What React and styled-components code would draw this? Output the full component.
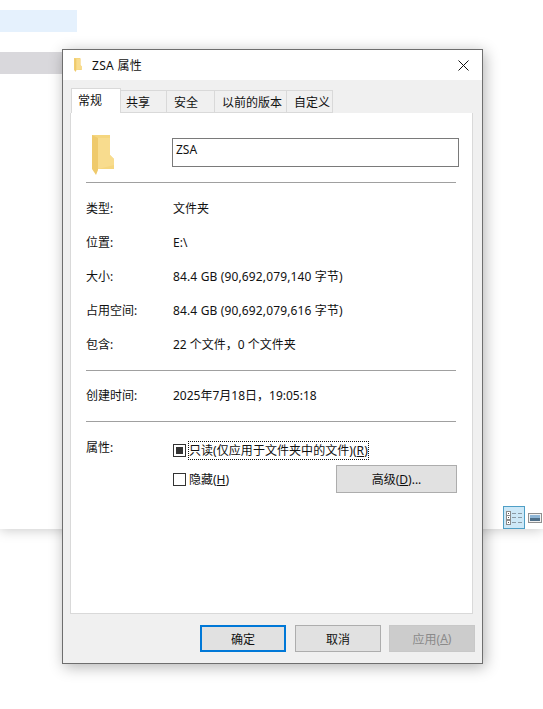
import React from 'react';
import styled, { createGlobalStyle } from 'styled-components';

const GlobalStyle = createGlobalStyle`
  html, body {
    margin: 0;
    padding: 0;
    background: #fff;
  }
  body {
    font-family: "Noto Sans", "Noto Sans CJK SC", sans-serif;
    font-size: 12px;
    color: #111;
  }
`;

const Page = styled.div`
  position: relative;
  width: 543px;
  height: 709px;
  overflow: hidden;
  background: #fff;
`;

const BackWindow = styled.div`
  height: 529px;
  display: flex;
  flex-direction: column;
  background: #fff;
  box-shadow: 0 1px 12px rgba(0, 0, 0, 0.22);
`;
const NavSelected = styled.div`
  width: 77px;
  height: 22px;
  margin-top: 10px;
  background: #e5f1fd;
`;
const ListSelected = styled.div`
  width: 70px;
  height: 22px;
  margin-top: 20px;
  background: #d9d8dc;
`;
const ViewSwitch = styled.div`
  margin-top: auto;
  display: flex;
  justify-content: flex-end;
  gap: 3px;
`;
const ViewButton = styled.div`
  width: ${(p) => (p.$active ? 22 : 15)}px;
  height: 23px;
  box-sizing: border-box;
  display: flex;
  align-items: center;
  justify-content: ${(p) => (p.$active ? 'center' : 'flex-start')};
  background: ${(p) => (p.$active ? '#cde8f7' : 'transparent')};
  border: ${(p) => (p.$active ? '1px solid #4f9fc6' : 'none')};
`;

const Dialog = styled.div`
  position: absolute;
  left: 62px;
  top: 49px;
  width: 419px;
  height: 613px;
  display: flex;
  flex-direction: column;
  background: #f0f0f0;
  border: 1px solid #6e6e6e;
  box-shadow: 2px 3px 14px rgba(0, 0, 0, 0.3);
`;
const TitleBar = styled.div`
  height: 30px;
  display: flex;
  align-items: center;
  padding: 0 13px 0 10px;
  background: #fff;
`;
const Title = styled.div`
  margin-left: 9px;
  letter-spacing: 0.3px;
  flex: 1;
`;
const Tabs = styled.div`
  height: 33px;
  display: flex;
  align-items: flex-end;
  padding-left: 8px;
`;
const Tab = styled.div`
  width: ${(p) => p.$w}px;
  height: ${(p) => (p.$active ? 25 : 23)}px;
  box-sizing: border-box;
  display: flex;
  align-items: center;
  padding-left: ${(p) => p.$inset}px;
  padding-bottom: ${(p) => (p.$active ? 2 : 0)}px;
  background: ${(p) => (p.$active ? '#fff' : '#f0f0f0')};
  border: 1px solid #d9d9d9;
  border-left-width: ${(p) => (p.$active ? 1 : 0)}px;
  border-bottom: ${(p) => (p.$active ? 'none' : '1px solid #d9d9d9')};
`;
const Panel = styled.div`
  width: 403px;
  height: 501px;
  box-sizing: border-box;
  margin-left: 7px;
  padding: 0 16px 0 15px;
  background: #fff;
  border: 1px solid #d9d9d9;
  border-top: none;
`;
const NameRow = styled.div`
  height: 69px;
  display: flex;
  align-items: flex-start;
`;
const FolderBox = styled.div`
  width: 86px;
  flex-shrink: 0;
  padding: 22px 0 0 6px;
  box-sizing: border-box;
`;
const NameField = styled.div`
  width: 287px;
  height: 29px;
  box-sizing: border-box;
  margin-top: 25px;
  padding: 2px 3px;
  border: 1px solid #7a7a7a;
  flex-shrink: 0;
`;
const Divider = styled.div`
  width: 370px;
  height: 1px;
  background: #a0a0a0;
`;
const InfoGroup = styled.div`
  display: flex;
  flex-direction: column;
  gap: 16px;
  padding: ${(p) => p.$pad};
`;
const Row = styled.div`
  display: flex;
  height: 18px;
  line-height: 18px;
`;
const Label = styled.div`
  width: 87px;
  flex-shrink: 0;
`;
const Value = styled.div`
  letter-spacing: ${(p) => p.$spacing || 0}px;
`;
const AttrRow = styled.div`
  display: flex;
  padding-top: 16px;
`;
const AttrOptions = styled.div`
  flex: 1;
  display: flex;
  flex-direction: column;
  padding-top: 3px;
`;
const Check = styled.div`
  display: flex;
  align-items: center;
  height: 18px;
`;
const CheckBox = styled.div`
  width: 13px;
  height: 13px;
  box-sizing: border-box;
  margin-right: 3px;
  border: 1px solid #333;
  display: flex;
  align-items: center;
  justify-content: center;
  &::after {
    content: '';
    display: ${(p) => (p.$mixed ? 'block' : 'none')};
    width: 7px;
    height: 7px;
    background: #333;
  }
`;
const FocusText = styled.span`
  outline: 1px dotted #111;
  line-height: 17px;
  letter-spacing: 0.05px;
`;
const HiddenRow = styled.div`
  display: flex;
  align-items: center;
  justify-content: space-between;
  margin-top: 6px;
  width: 284px;
`;
const Hotkey = styled.span`
  text-decoration: underline;
  text-underline-offset: 1px;
`;
const Button = styled.div`
  width: ${(p) => p.$w || 86}px;
  height: ${(p) => p.$h || 27}px;
  box-sizing: border-box;
  display: flex;
  align-items: center;
  justify-content: center;
  margin-right: ${(p) => (p.$primary ? 1 : 0)}px;
  background: ${(p) => (p.$disabled ? '#cccccc' : '#e1e1e1')};
  color: ${(p) => (p.$disabled ? '#8a8a8a' : '#111')};
  border: ${(p) => (p.$primary ? '2px solid #0078d7' : p.$disabled ? '1px solid #c8c8c8' : '1px solid #adadad')};
`;
const Footer = styled.div`
  display: flex;
  justify-content: flex-end;
  gap: 8px;
  padding: 11px 7px 0 0;
`;

const CloseIcon = () => (
  <svg width="11" height="11" viewBox="0 0 11 11">
    <path d="M0.5 0.5L10.5 10.5M10.5 0.5L0.5 10.5" stroke="#111" strokeWidth="1" fill="none" />
  </svg>
);

const FolderIcon = ({ w, h }) => (
  <svg width={w} height={h} viewBox="0 0 22 40">
    <path d="M0 0H18V20L22 24V34H6L0 34Z" fill="#f5d67f" />
    <path d="M6 3H18V20L22 24V30L6 34Z" fill="#f8dc8e" />
    <path d="M0 0L6 3V35L4 40L0 34Z" fill="#efca6c" />
  </svg>
);

const DetailsIcon = () => (
  <svg width="16" height="14" viewBox="0 0 16 14">
    <rect x="0.5" y="0.5" width="4" height="4" fill="#fff" stroke="#8a8a8a" />
    <rect x="0.5" y="4.5" width="4" height="4" fill="#fff" stroke="#8a8a8a" />
    <rect x="0.5" y="9.5" width="4" height="4" fill="#fff" stroke="#8a8a8a" />
    <rect x="2" y="2" width="1" height="1" fill="#555" />
    <rect x="2" y="6" width="1" height="1" fill="#555" />
    <rect x="2" y="11" width="1" height="1" fill="#555" />
    <path d="M6 2.5h4M12 2.5h4M6 6.5h4M12 6.5h4M6 11.5h4M12 11.5h4" stroke="#8a9aa5" />
  </svg>
);

const PreviewIcon = () => (
  <svg width="14" height="10" viewBox="0 0 14 10">
    <rect x="0.5" y="0.5" width="13" height="9" fill="#f2f2f2" stroke="#8f8f8f" />
    <rect x="2" y="2" width="10" height="3" fill="#8fb6d6" />
    <rect x="2" y="5" width="10" height="3" fill="#4f6f88" />
  </svg>
);

const infoRows = [
  ['类型:', '文件夹'],
  ['位置:', 'E:\\'],
  ['大小:', '84.4 GB (90,692,079,140 字节)', 0.14],
  ['占用空间:', '84.4 GB (90,692,079,616 字节)', 0.14],
  ['包含:', '22 个文件，0 个文件夹'],
];

const tabs = [
  ['常规', 50, 6],
  ['共享', 46, 5],
  ['安全', 48, 7],
  ['以前的版本', 72, 7],
  ['自定义', 46, 7],
];

export default function App() {
  return (
    <Page>
      <GlobalStyle />
      <BackWindow>
        <NavSelected />
        <ListSelected />
        <ViewSwitch>
          <ViewButton $active><DetailsIcon /></ViewButton>
          <ViewButton><PreviewIcon /></ViewButton>
        </ViewSwitch>
      </BackWindow>
      <Dialog>
        <TitleBar>
          <FolderIcon w={10} h={14} />
          <Title>ZSA 属性</Title>
          <CloseIcon />
        </TitleBar>
        <Tabs>
          {tabs.map(([name, w, inset], i) => (
            <Tab key={name} $w={w} $inset={inset} $active={i === 0}>{name}</Tab>
          ))}
        </Tabs>
        <Panel>
          <NameRow>
            <FolderBox><FolderIcon w={22} h={40} /></FolderBox>
            <NameField>ZSA</NameField>
          </NameRow>
          <Divider />
          <InfoGroup $pad="17px 0 16px">
            {infoRows.map(([k, v, spacing]) => (
              <Row key={k}><Label>{k}</Label><Value $spacing={spacing}>{v}</Value></Row>
            ))}
          </InfoGroup>
          <Divider />
          <InfoGroup $pad="16px 0 16px">
            <Row><Label>创建时间:</Label><Value>2025年7月18日，19:05:18</Value></Row>
          </InfoGroup>
          <Divider />
          <AttrRow>
            <Label>属性:</Label>
            <AttrOptions>
              <Check>
                <CheckBox $mixed />
                <FocusText>只读(仅应用于文件夹中的文件)(<Hotkey>R</Hotkey>)</FocusText>
              </Check>
              <HiddenRow>
                <Check>
                  <CheckBox />
                  <span>隐藏(<Hotkey>H</Hotkey>)</span>
                </Check>
                <Button $w={121} $h={28}>高级(<Hotkey>D</Hotkey>)...</Button>
              </HiddenRow>
            </AttrOptions>
          </AttrRow>
        </Panel>
        <Footer>
          <Button $primary>确定</Button>
          <Button>取消</Button>
          <Button $disabled>应用(<Hotkey>A</Hotkey>)</Button>
        </Footer>
      </Dialog>
    </Page>
  );
}
